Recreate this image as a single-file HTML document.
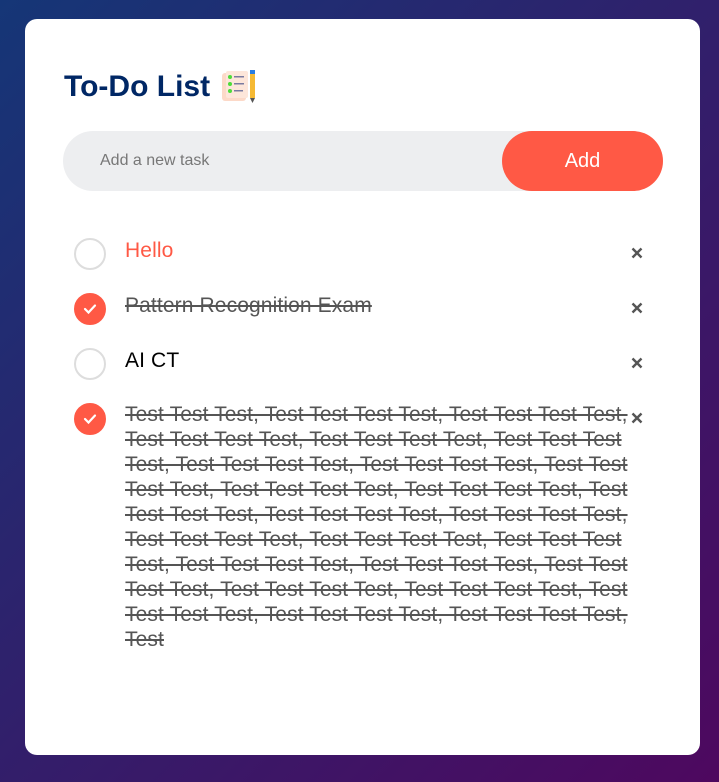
<!DOCTYPE html>
<html><head><meta charset="utf-8"><style>
*{margin:0;padding:0;box-sizing:border-box}
body{width:719px;height:782px;background:linear-gradient(135deg,#153677,#4e085f);font-family:"Liberation Sans",sans-serif;position:relative;overflow:hidden}
.card{position:absolute;left:25px;top:19px;width:675px;height:736px;background:#fff;border-radius:12px}
h2{position:absolute;left:39px;top:51px;font-size:30px;font-weight:bold;color:#002765;display:flex;align-items:center}
.row{position:absolute;left:38px;top:112px;width:600px;height:60px;background:#edeef0;border-radius:30px}
.row span{position:absolute;left:37px;top:21px;font-size:16px;color:#777}
.btn{position:absolute;right:0;top:0;width:161px;height:60px;background:#ff5945;border-radius:30px;color:#fff;font-size:20px;text-align:center;line-height:60px}
.item{position:absolute;left:0;width:675px}
.c{position:absolute;left:49px;width:32px;height:32px;border-radius:50%;border:2px solid #ddd}
.c.on{background:#ff5945;border-color:#ff5945}
.c.on svg{position:absolute;left:7px;top:8px}
.t{position:absolute;left:100px;font-size:21px;letter-spacing:0.12px;line-height:25px;white-space:nowrap;color:#000}
.t.done{color:#555;text-decoration:line-through}
.x{position:absolute;left:606px;width:12px;height:12px}
</style></head><body>
<div class="card">
<h2>To-Do List <svg width="38" height="34" viewBox="0 0 38 34" style="margin-left:10px"><rect x="2" y="3" width="24" height="28" rx="3" fill="#fcd9c8"/><rect x="6" y="1" width="22" height="27" rx="2" fill="#fde6da"/><circle cx="10" cy="7" r="2" fill="#4ddb3a"/><circle cx="10" cy="14" r="2" fill="#4ddb3a"/><circle cx="10" cy="21" r="2" fill="#4ddb3a"/><rect x="14" y="6" width="10" height="1.5" fill="#7a7aa0"/><rect x="14" y="13" width="10" height="1.5" fill="#7a7aa0"/><rect x="14" y="20" width="9" height="1.5" fill="#7a7aa0"/><rect x="30" y="0" width="5" height="4" fill="#2a7de1"/><rect x="30" y="4" width="5" height="24" fill="#f5b934"/><polygon points="30,28 35,28 32.5,33" fill="#555"/></svg></h2>
<div class="row"><span>Add a new task</span><div class="btn">Add</div></div>

<div class="item" style="top:203px"><div class="c" style="top:16px"></div><div class="t" style="top:16px;color:#ff5945">Hello</div><svg class="x" style="top:25px" viewBox="0 0 12 12"><path d="M1.5 1.5L10.5 10.5M10.5 1.5L1.5 10.5" stroke="#555" stroke-width="2.4"/></svg></div>
<div class="item" style="top:258px"><div class="c on" style="top:16px"><svg width="14" height="12" viewBox="0 0 14 12"><path d="M2 6 L5.5 9.5 L12 2.5" stroke="#fff" stroke-width="2.2" fill="none" stroke-linecap="round"/></svg></div><div class="t done" style="top:16px">Pattern Recognition Exam</div><svg class="x" style="top:25px" viewBox="0 0 12 12"><path d="M1.5 1.5L10.5 10.5M10.5 1.5L1.5 10.5" stroke="#555" stroke-width="2.4"/></svg></div>
<div class="item" style="top:313px"><div class="c" style="top:16px"></div><div class="t" style="top:16px">AI CT</div><svg class="x" style="top:25px" viewBox="0 0 12 12"><path d="M1.5 1.5L10.5 10.5M10.5 1.5L1.5 10.5" stroke="#555" stroke-width="2.4"/></svg></div>
<div class="item" style="top:368px"><div class="c on" style="top:16px"><svg width="14" height="12" viewBox="0 0 14 12"><path d="M2 6 L5.5 9.5 L12 2.5" stroke="#fff" stroke-width="2.2" fill="none" stroke-linecap="round"/></svg></div><div class="t done" style="top:15px">Test Test Test, Test Test Test Test, Test Test Test Test,<br>Test Test Test Test, Test Test Test Test, Test Test Test<br>Test, Test Test Test Test, Test Test Test Test, Test Test<br>Test Test, Test Test Test Test, Test Test Test Test, Test<br>Test Test Test, Test Test Test Test, Test Test Test Test,<br>Test Test Test Test, Test Test Test Test, Test Test Test<br>Test, Test Test Test Test, Test Test Test Test, Test Test<br>Test Test, Test Test Test Test, Test Test Test Test, Test<br>Test Test Test, Test Test Test Test, Test Test Test Test,<br>Test</div><svg class="x" style="top:25px" viewBox="0 0 12 12"><path d="M1.5 1.5L10.5 10.5M10.5 1.5L1.5 10.5" stroke="#555" stroke-width="2.4"/></svg></div>
</div>
</body></html>
